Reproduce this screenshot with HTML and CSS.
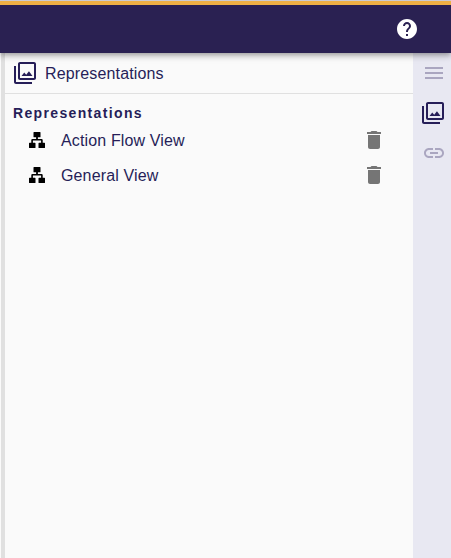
FILE: index.html
```html
<!DOCTYPE html>
<html lang="en">
<head>
<meta charset="utf-8">
<title>Representations</title>
<link rel="stylesheet" href="styles.css">
</head>
<body>
<svg class="defs" aria-hidden="true">
  <symbol id="gallery" viewBox="0 0 24 24"><path d="M15.96 10.29l-2.75 3.54-1.96-2.36L8.5 15h11l-3.54-4.71zM3 5H1v16c0 1.1.9 2 2 2h16v-2H3V5zm18-4H7c-1.1 0-2 .9-2 2v14c0 1.1.9 2 2 2h14c1.1 0 2-.9 2-2V3c0-1.1-.9-2-2-2zm0 16H7V3h14v14z"/></symbol>
  <symbol id="trash" viewBox="0 0 24 24"><path d="M6 19c0 1.1.9 2 2 2h8c1.1 0 2-.9 2-2V7H6v12zM19 4h-3.500l-1-1h-5l-1 1H5v2h14V4z"/></symbol>
  <symbol id="tree" viewBox="0 0 16 16"><path d="M5 0h6q.5 0 .5.500v4.200q0 .5-.5.500H8.900V6.900H12.500q1.200 0 1.200 1.200v2.600h1.700q.6 0 .6.500v4.200q0 .6-.6.600H10.100q-.6 0-.6-.6v-4.200q0-.5.600-.5h2V8.500H3.900v2.200h2q.6 0 .6.500v4.200q0 .6-.6.600H.6q-.6 0-.6-.6v-4.200q0-.5.600-.5h1.700V8.100q0-1.200 1.200-1.200h3.600V5.200H5q-.5 0-.5-.5V.5q0-.5.500-.5z"/></symbol>
</svg>
<header class="navbar">
  <svg class="icon" viewBox="0 0 24 24"><path d="M12 2C6.480 2 2 6.480 2 12s4.480 10 10 10 10-4.480 10-10S17.520 2 12 2zm1 17h-2v-2h2v2zm2.070-7.750l-.9.920C13.450 12.900 13 13.500 13 15h-2v-.5c0-1.100.450-2.100 1.170-2.830l1.240-1.260c.370-.360.590-.860.590-1.410 0-1.100-.9-2-2-2s-2 .9-2 2H8c0-2.210 1.790-4 4-4s4 1.790 4 4c0 .880-.360 1.680-.930 2.250z"/></svg>
</header>
<div class="workbench">
  <div class="resizer"></div>
  <main class="panel">
    <div class="panel-header">
      <svg class="icon"><use href="#gallery"/></svg>
      <span class="panel-title">Representations</span>
    </div>
    <h2 class="section-title">Representations</h2>
    <ul class="list">
      <li class="item">
        <svg class="tree-icon"><use href="#tree"/></svg>
        <span class="label">Action Flow View</span>
        <svg class="icon trash"><use href="#trash"/></svg>
      </li>
      <li class="item">
        <svg class="tree-icon"><use href="#tree"/></svg>
        <span class="label">General View</span>
        <svg class="icon trash"><use href="#trash"/></svg>
      </li>
    </ul>
  </main>
  <nav class="rail">
    <svg class="icon muted" viewBox="0 0 24 24"><path d="M3 18h18v-2H3v2zm0-5h18v-2H3v2zm0-7v2h18V6H3z"/></svg>
    <svg class="icon selected"><use href="#gallery"/></svg>
    <svg class="icon muted" viewBox="0 0 24 24"><path d="M3.900 12c0-1.710 1.390-3.100 3.100-3.100h4V7H7c-2.760 0-5 2.240-5 5s2.240 5 5 5h4v-1.900H7c-1.710 0-3.100-1.390-3.100-3.100zM8 13h8v-2H8v2zm9-6h-4v1.900h4c1.710 0 3.100 1.390 3.100 3.100s-1.390 3.100-3.100 3.100h-4V17h4c2.760 0 5-2.240 5-5s-2.240-5-5-5z"/></svg>
  </nav>
</div>
</body>
</html>
```
FILE: styles.css
```css
* {
  box-sizing: border-box;
}

body {
  margin: 0;
  height: 100vh;
  display: flex;
  flex-direction: column;
  overflow: hidden;
  border-top: 1px solid #cccbd2;
  background: #fafafa;
  color: #261e58;
  font-family: "Liberation Sans", Arial, sans-serif;
  font-size: 16px;
}

.defs {
  display: none;
}

.icon {
  width: 24px;
  height: 24px;
  flex: none;
  fill: currentColor;
}

.navbar {
  z-index: 1;
  flex: none;
  height: 52px;
  padding: 12px 32px 0 0;
  display: flex;
  justify-content: flex-end;
  border-top: 4px solid #efb145;
  background: #2a2152;
  color: #fff;
  box-shadow: 0 2px 4px -1px rgba(0, 0, 0, 0.2), 0 4px 5px rgba(0, 0, 0, 0.14), 0 1px 10px rgba(0, 0, 0, 0.12);
}

.workbench {
  flex: 1;
  display: flex;
}

.resizer {
  width: 5px;
  border-left: 1px solid #fafafa;
  background: #e0e0e0;
}

.panel {
  flex: 1;
}

.panel-header {
  display: flex;
  align-items: center;
  gap: 8px;
  height: 41px;
  padding-left: 8px;
  border-bottom: 1px solid #e0e0e0;
}

.panel-title {
  padding-top: 2px;
  letter-spacing: 0.15px;
}

.section-title {
  margin: 10px 0 0 8px;
  font-size: 14px;
  line-height: 18px;
  letter-spacing: 1.35px;
}

.list {
  margin: 1px 0 0;
  padding: 0;
  list-style: none;
}

.item {
  display: flex;
  align-items: center;
  height: 35px;
  padding: 0 27px 2px 24px;
}

.tree-icon {
  width: 16px;
  height: 16px;
  fill: #000;
}

.label {
  flex: 1;
  margin-left: 16px;
  padding-top: 2px;
  letter-spacing: 0.14px;
}

.trash {
  color: #757575;
}

.rail {
  width: 38px;
  padding: 8px 5px 0 8px;
  display: flex;
  flex-direction: column;
  align-items: flex-end;
  gap: 16px;
  background: #e8e8f2;
}

.muted {
  color: #aaa6c0;
}

.selected {
  margin-right: 1px;
}
```
